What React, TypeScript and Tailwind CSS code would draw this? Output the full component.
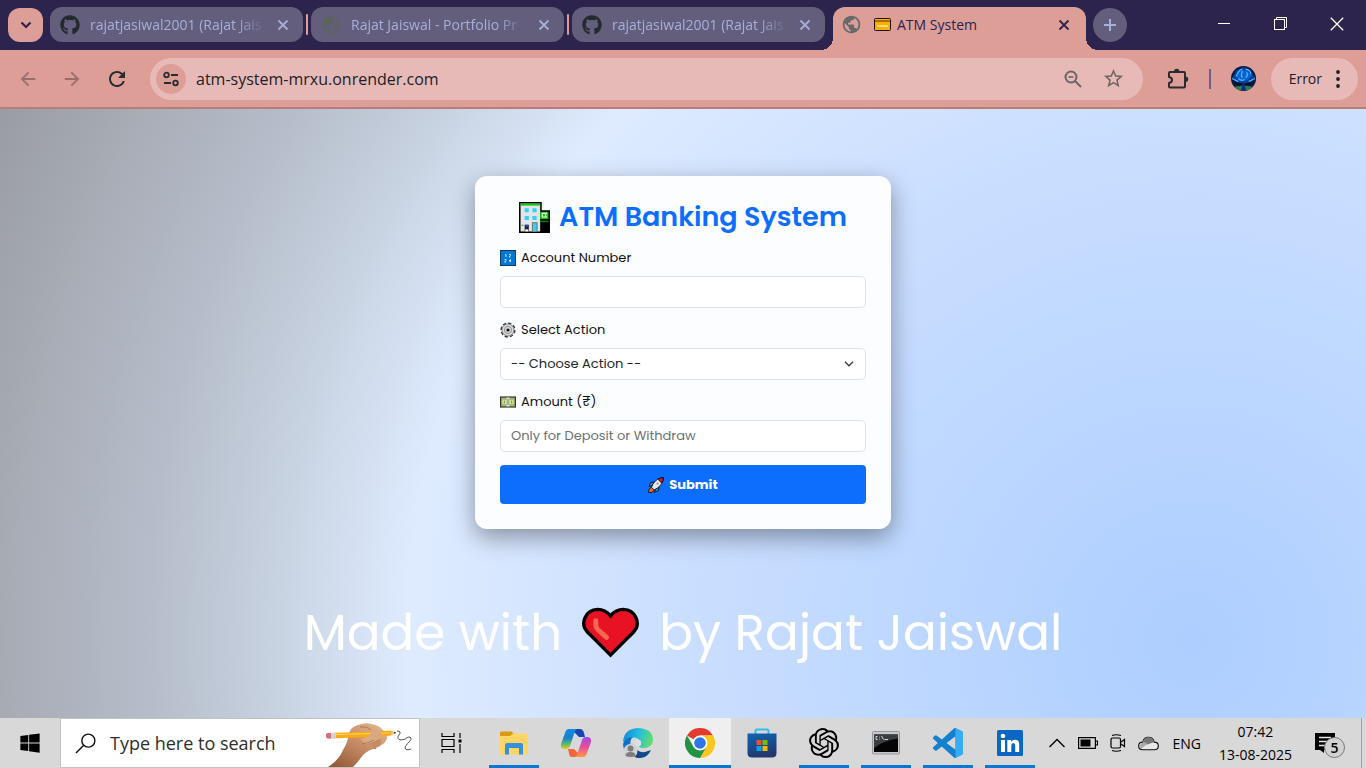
import React from "react";
import { FaGithub, FaWindows } from "react-icons/fa";
import { MdPublic, MdArrowBack, MdArrowForward, MdRefresh, MdStarBorder } from "react-icons/md";
import { SiOpenai } from "react-icons/si";

/* ---------- Browser chrome ---------- */

function CloseIcon() {
  return (
    <svg viewBox="0 0 12 12" className="size-3" stroke="currentColor" strokeWidth="1.800" fill="none" aria-hidden="true">
      <path d="M1.500 1.500l9 9M10.500 1.500l-9 9" />
    </svg>
  );
}

function DimGlobe() {
  return (
    <svg viewBox="0 0 18 18" className="size-[18px]" fill="none" stroke="#5d645c" strokeWidth="1.300" aria-hidden="true">
      <circle cx="9" cy="9" r="8" />
      <path d="M9 1.500c3 1 1.500 2.500.5 3.500s1 2-.5 2.500-2.500.5-3 2-.5 1-1.500.5S2.500 9 1.500 8.500C2 4.500 5 1.500 9 1.500z" fill="#5d645c" />
      <path d="M16.500 8.500c-1.500 1.500-4-1-5 1s1 2 1.500 3 .5 1.500 0 2.500M6 16.500c0-2 1-2 1.500-3" />
    </svg>
  );
}

function Tab({ title, icon }: { title: string; icon: React.ReactNode }) {
  return (
    <div className="flex h-[35px] w-[253px] items-center rounded-xl bg-[#635e7c] pr-3 pl-[10px] text-[#a7aedb]">
      {icon}
      <span className="ml-[10px] flex-1 text-[14px] whitespace-nowrap [mask-image:linear-gradient(to_right,black_82%,transparent)]">
        {title}
      </span>
      <button aria-label={"Close " + title} className="ml-2 flex size-4 items-center justify-center">
        <CloseIcon />
      </button>
    </div>
  );
}

function TabSeparator() {
  return <span className="mx-[3px] h-[21px] w-[2px] rounded-full bg-[#dd9e98]" />;
}

function TabStrip() {
  return (
    <header className="flex h-[50px] bg-[#2c244d] pl-2">
      <button aria-label="Search tabs" className="mt-2 mr-[7px] flex h-[34px] w-[35px] items-center justify-center rounded-xl bg-[#dd9e98] text-[#2c244d]">
        <svg viewBox="0 0 12 8" className="h-2 w-3" fill="none" stroke="currentColor" strokeWidth="2.200" aria-hidden="true">
          <path d="M1.500 1.500L6 6l4.500-4.500" />
        </svg>
      </button>
      <div className="mt-[7px] flex h-[35px] items-center">
        <Tab title="rajatjasiwal2001 (Rajat Jais" icon={<FaGithub className="size-5 text-[#24292e]" />} />
        <TabSeparator />
        <Tab title="Rajat Jaiswal - Portfolio Pr" icon={<span className="flex size-5 items-center justify-center"><DimGlobe /></span>} />
        <TabSeparator />
        <Tab title="rajatjasiwal2001 (Rajat Jais" icon={<FaGithub className="size-5 text-[#24292e]" />} />
      </div>
      <div className="relative mt-[7px] ml-2 flex w-[253px] items-center rounded-t-xl bg-[#dd9e98] pr-[14px] pb-2 pl-2 text-[#2c244d]">
        <span className="absolute bottom-0 -left-3 size-3 bg-[radial-gradient(circle_at_0_0,transparent_12px,#dd9e98_12px)]" />
        <span className="absolute -right-3 bottom-0 size-3 bg-[radial-gradient(circle_at_100%_0,transparent_12px,#dd9e98_12px)]" />
        <MdPublic className="size-[21px] text-[#646a6c]" />
        <svg viewBox="0 0 17 13" className="ml-3 h-[13px] w-[17px]" aria-hidden="true">
          <rect x=".5" y=".5" width="16" height="12" rx="1" fill="#fcb100" stroke="#1c1200" />
          <path d="M1 2h15v2H1z" fill="#b36b00" />
          <path d="M3 8h11" stroke="#ffe7a3" strokeWidth="1.500" />
        </svg>
        <span className="ml-[6px] flex-1 text-[14px] whitespace-nowrap">ATM System</span>
        <button aria-label="Close ATM System" className="flex size-4 items-center justify-center">
          <CloseIcon />
        </button>
      </div>
      <button aria-label="New tab" className="mt-2 ml-[7px] flex size-[34px] items-center justify-center rounded-full bg-[#635e7c] text-[#a7aedb]">
        <svg viewBox="0 0 14 14" className="size-[14px]" stroke="currentColor" strokeWidth="2" aria-hidden="true">
          <path d="M7 1v12M1 7h12" />
        </svg>
      </button>
      <div className="ml-auto flex h-12 text-white">
        <button aria-label="Minimize" className="flex w-14 items-center justify-center">
          <svg viewBox="0 0 14 14" className="size-[14px]" stroke="currentColor" aria-hidden="true"><path d="M1 6.500h12" /></svg>
        </button>
        <button aria-label="Restore" className="flex w-14 items-center justify-center">
          <svg viewBox="0 0 14 14" className="size-[14px]" stroke="currentColor" fill="none" aria-hidden="true">
            <rect x="1.500" y="2.500" width="10" height="10" /><path d="M3.500 2.500v-2h10v10h-2" />
          </svg>
        </button>
        <button aria-label="Close window" className="flex w-[58px] items-center justify-center">
          <svg viewBox="0 0 14 14" className="size-[14px]" stroke="currentColor" strokeWidth="1.300" aria-hidden="true"><path d="M.8.8l12.400 12.400M13.200.8L.8 13.200" /></svg>
        </button>
      </div>
    </header>
  );
}

function Avatar() {
  return (
    <svg viewBox="0 0 24 24" className="size-[25px]" aria-hidden="true">
      <defs><clipPath id="avatar"><circle cx="12" cy="12" r="12" /></clipPath></defs>
      <g clipPath="url(#avatar)">
        <path d="M0 0h24v24H0z" fill="#06183d" />
        <path d="M1 12l4-8 7-3 6 2 5 8-7 6H8z" fill="#07419c" />
        <path d="M4 10l5-6h6l5 5-5 5H9z" fill="#0b63d6" />
        <path d="M5 10q2-6 6-7M14 3q5 1 5 5M7 12q3 3 6 1M11 5q-2 4 0 6M15 6q2 3-1 5M1 12l6 3M23 12l-6 3" stroke="#49b6ff" strokeWidth="1.200" fill="none" />
        <path d="M4 15l8 2 8-2-4 4H8z" fill="#031027" />
        <path d="M0 20.500l10-1.500h5l9 1.500V24H0z" fill="#2a7b55" />
        <path d="M11.500 16h1l2 8h-5z" fill="#0a2d7a" />
      </g>
    </svg>
  );
}

function Toolbar() {
  return (
    <div className="flex h-[59px] items-center border-b-2 border-[#b87d7b] bg-[#dd9e98] pr-2 pl-[17px] text-[#2b2b2d]">
      <button aria-label="Back" className="text-[#9a6e6d]"><MdArrowBack className="size-[22px]" /></button>
      <button aria-label="Forward" className="ml-[22px] text-[#9a6e6d]"><MdArrowForward className="size-[22px]" /></button>
      <button aria-label="Reload" className="ml-[22px]"><MdRefresh className="size-[24px]" /></button>
      <div className="ml-[21px] flex h-[42px] flex-1 items-center rounded-full bg-[#e8bab7] pr-[18px] pl-[6px]">
        <button aria-label="View site information" className="flex size-[30px] items-center justify-center rounded-full bg-[#dd9e98]">
          <svg viewBox="0 0 16 16" className="size-4" fill="none" stroke="currentColor" strokeWidth="1.800" aria-hidden="true">
            <circle cx="3.500" cy="4" r="2.300" /><path d="M8 4h7M1 12h7" /><circle cx="12.500" cy="12" r="2.300" />
          </svg>
        </button>
        <input aria-label="Address" readOnly value="atm-system-mrxu.onrender.com" className="ml-[10px] min-w-0 flex-1 bg-transparent text-[16px] text-[#202124] outline-none" />
        <button aria-label="Zoom" className="text-[#6d6466]">
          <svg viewBox="0 0 18 18" className="size-[18px]" fill="none" stroke="currentColor" strokeWidth="2" aria-hidden="true">
            <circle cx="7" cy="7" r="5.500" /><path d="M11 11l6 6" /><path d="M4.500 7h5" strokeWidth="1.600" />
          </svg>
        </button>
        <button aria-label="Bookmark this tab" className="ml-5 text-[#6d6466]"><MdStarBorder className="size-[23px]" /></button>
      </div>
      <button aria-label="Extensions" className="ml-6">
        <svg viewBox="0 0 22 22" className="size-[22px]" aria-hidden="true">
          <path d="M3 4h14a1 1 0 0 1 1 1v13.500a1 1 0 0 1-1 1H3a1 1 0 0 1-1-1V15q3-.5 3-3t-3-3V5a1 1 0 0 1 1-1z" fill="none" stroke="currentColor" strokeWidth="2" strokeLinejoin="round" />
          <path d="M7 3.500a2.700 2.700 0 0 1 5.400 0zM18.500 8.500a2.700 2.700 0 0 1 0 5.400z" fill="currentColor" />
        </svg>
      </button>
      <span className="ml-5 h-5 w-[2px] bg-[#6e608a]" />
      <button aria-label="Profile" className="ml-5"><Avatar /></button>
      <button className="ml-[15px] flex h-[42px] items-center rounded-full bg-[#e8bab7] pr-[18px] pl-[18px] text-[14px] text-[#202124]">
        <span>Error</span>
        <svg viewBox="0 0 4 18" className="ml-[14px] h-[18px] w-1" fill="currentColor" aria-hidden="true">
          <circle cx="2" cy="2" r="1.900" /><circle cx="2" cy="9" r="1.900" /><circle cx="2" cy="16" r="1.900" />
        </svg>
      </button>
    </div>
  );
}

/* ---------- Page ---------- */

function BankIcon() {
  return (
    <svg viewBox="0 0 30 30" className="size-[31px]" aria-hidden="true">
      <path d="M0 0h22v8h8v22H0z" fill="#000" />
      <path d="M1.500 1.500h19V28.500H1.500z" fill="#e3e5e8" />
      <path d="M1.500 1.500h19v2h-19z" fill="#16c60c" />
      <path d="M5.500 6h4v4h-4zM13 6h4v4h-4zM5.500 13.500h4v4h-4zM13 13.500h4v4h-4z" fill="#31d2f7" />
      <path d="M20.500 9.500h8v7h-8z" fill="#16c60c" />
      <path d="M22.500 11h4l-1 1.700 1 1.800h-4z" fill="none" stroke="#e8ffe8" />
      <path d="M20.500 18h8v1.500h-8z" fill="#0b7a06" />
      <path d="M12.500 19.500H18v9h-5.500z" fill="#767676" /><path d="M13.500 20.500h3.500v8h-3.500z" fill="#31d2f7" />
      <path d="M5.500 22h4v6.500h-4z" fill="#222" /><path d="M6.500 22h2v2h-2z" fill="#2a4bff" />
      <path d="M2.500 22.500h2" stroke="#16c60c" /><path d="M6 26.500h3v2H6z" fill="#fff" />
    </svg>
  );
}

function NumbersIcon() {
  return (
    <svg viewBox="0 0 16 16" className="size-4" aria-hidden="true">
      <rect x=".5" y=".5" width="15" height="15" fill="#0078d7" stroke="#123a63" />
      <path d="M5 5l1-.5V7M9 4.500h1.500v1L9 7h1.500M4.500 9.500H6v1L4.500 12H6M10.500 12V9.500L9 11h2" fill="none" stroke="#d7ecff" strokeWidth=".9" />
    </svg>
  );
}

function GearIcon() {
  return (
    <svg viewBox="0 0 16 16" className="size-4" fill="none" aria-hidden="true">
      <circle cx="8" cy="8" r="6.900" stroke="#333" strokeWidth="1.300" strokeDasharray="3.400 2" />
      <circle cx="8" cy="8" r="6" fill="#dadada" stroke="#444" strokeWidth=".6" />
      <circle cx="8" cy="8" r="3.600" stroke="#8a8a8a" strokeWidth=".9" />
      <circle cx="8" cy="8" r="1.600" fill="#111" />
    </svg>
  );
}

function CashIcon() {
  return (
    <svg viewBox="0 0 16 16" className="size-4" aria-hidden="true">
      <rect x=".6" y="3" width="14.800" height="10" fill="#a3b679" stroke="#30342a" strokeWidth="1.200" />
      <path d="M6.500 3.500h3v9h-3z" fill="#d9dccb" />
      <circle cx="4.300" cy="8" r="2.200" fill="#d4f08e" /><circle cx="11.700" cy="8" r="2.200" fill="#d4f08e" />
      <path d="M8 5v6M4.300 6.500v3M11.700 6.500v3" stroke="#5d7048" strokeWidth=".8" />
    </svg>
  );
}

function RocketIcon() {
  return (
    <svg viewBox="0 0 16 16" className="size-4" stroke="#000" strokeWidth=".8" strokeLinejoin="round" aria-hidden="true">
      <path d="M4 8.500L1 9.500l1.500-4L7 5zM7.500 12l-1 3.300 4-1.800L11 9z" fill="#0aa0d0" />
      <path d="M3.500 10L.8 12.500v3h3L6.500 13z" fill="#f7630c" />
      <path d="M15.300.7Q9 .8 5 7l-1.500 3.200 2.600 2.700L9.500 11q6-4.500 5.800-10.300z" fill="#e8eaed" />
      <path d="M15.300.7q-2.800 0-5.300 1.500l3.500 3.900Q15.300 3.500 15.300.7z" fill="#e81224" />
      <circle cx="9.500" cy="6.600" r="1.200" fill="#9aa3ad" stroke="none" />
    </svg>
  );
}

function HeartIcon() {
  return (
    <svg viewBox="0 0 58 52" className="mx-5 h-[51px] w-[57px]" aria-hidden="true">
      <path d="M29 49L5 25C-2 17 3 3 16 2.500c6 0 10 3 13 6.500 3-3.500 7-6.500 13-6.500C55 3 60 17 53 25z" fill="#e81224" stroke="#000" strokeWidth="3.400" />
      <path d="M14 14v4q0 3 2 5l9 8" fill="none" stroke="#f2694f" strokeWidth="5" strokeLinecap="round" />
    </svg>
  );
}

function Field({ id, label, icon, children }: { id: string; label: string; icon: React.ReactNode; children: React.ReactNode }) {
  return (
    <div>
      <label htmlFor={id} className="mb-2 flex h-5 items-center gap-[5px] text-[13px] text-[#111]">
        {icon}
        <span>{label}</span>
      </label>
      {children}
    </div>
  );
}

const control =
  "block h-8 w-full rounded-[5px] border border-[#dee2e6] bg-white px-[10px] text-[13px] text-[#212529] outline-none placeholder:text-[#6b7075]";

function AtmPage() {
  return (
    <main className="flex flex-1 flex-col items-center bg-[radial-gradient(circle_farthest-corner_at_87.2%_87.2%,#adceff_0%,#cbdfff_40%,#deebff_60%,#c4cedc_72%,#b6bdca_80%,#a8adb6_90%,#999ca3_100%)] px-4 pt-[67px] pb-12 font-['Poppins','Inter',sans-serif]">
      <form onSubmit={(e) => e.preventDefault()} className="w-full max-w-[416px] rounded-xl bg-[#fcfdff] px-[25px] pt-6 pb-[25px] shadow-[0_8px_24px_rgba(0,0,0,0.38)]">
        <h1 className="mb-[14px] flex h-[34px] items-center justify-center gap-[9px] text-[27px] font-semibold whitespace-nowrap text-[#0d6efd]">
          <BankIcon />
          <span>ATM Banking System</span>
        </h1>
        <div className="mb-[13px] flex flex-col gap-3">
          <Field id="account" label="Account Number" icon={<NumbersIcon />}>
            <input id="account" type="text" className={control} />
          </Field>
          <Field id="action" label="Select Action" icon={<GearIcon />}>
            <div className="relative">
              <select id="action" className={control + " appearance-none"}>
                <option>-- Choose Action --</option>
              </select>
              <svg viewBox="0 0 10 6" className="pointer-events-none absolute top-[13px] right-3 h-[6px] w-[10px]" fill="none" stroke="#343a40" strokeWidth="1.300" aria-hidden="true">
                <path d="M1 .8l4 4 4-4" />
              </svg>
            </div>
          </Field>
          <Field id="amount" label="Amount (₹)" icon={<CashIcon />}>
            <input id="amount" type="text" placeholder="Only for Deposit or Withdraw" className={control} />
          </Field>
        </div>
        <button type="submit" className="flex h-[39px] w-full items-center justify-center gap-[5px] rounded bg-[#0d6efd] text-[13px] font-bold text-white">
          <RocketIcon />
          <span>Submit</span>
        </button>
      </form>
      <footer className="mt-[65px] flex h-[76px] items-center text-[50px] whitespace-nowrap text-white">
        <span>Made with</span>
        <HeartIcon />
        <span>by Rajat Jaiswal</span>
      </footer>
    </main>
  );
}

/* ---------- Taskbar ---------- */

function HandPencil() {
  return (
    <svg viewBox="0 0 88 48" className="h-12 w-[88px]" aria-hidden="true">
      <defs>
        <linearGradient id="skin" x1="0" y1="1" x2=".8" y2="0">
          <stop offset="0" stopColor="#8f5233" /><stop offset=".5" stopColor="#c08660" /><stop offset="1" stopColor="#deb18b" />
        </linearGradient>
      </defs>
      <path d="M2 48q11-7 15-17 5-8 6-17 2-6 9-8 8-3 13-1 8 1 12 6l4 5q1 5-4 9l-5 3q-10 3-15 8-5 7-10 12z" fill="url(#skin)" />
      <path d="M42 24l10-2-2 8q-3 1-3-3zM49 22l6-2-1 7q-3 2-4-1z" fill="#c48a62" />
      <path d="M1 14l52-1.500 12-1v5L52 18 1 19.500z" fill="#fba919" />
      <path d="M10 15.500l54-1.500" stroke="#ffd566" strokeWidth="1.200" />
      <rect x="0" y="14" width="6" height="5.500" rx="2" fill="#d96b82" /><rect x="5" y="14" width="5" height="5.500" fill="#cfd3da" />
      <path d="M65 11.500l5 2.300-5 2.700z" fill="#e6c08e" /><path d="M68 12.800l2.500 1-2.500 1z" fill="#333" />
      <path d="M34 20q7-1 13-8 5-3 8 0 2 4-2 7-6 5-13 6z" fill="#dba97f" />
      <path d="M34 8q7-1 11 3M36 25q7-1 12-4" stroke="#a86e4b" strokeWidth=".8" fill="none" />
      <path d="M71 12q5 0 2 4t2 5q4 0 7-3 5 0 2 4-5 5-5 7 1 3 6 1" stroke="#555" fill="none" />
    </svg>
  );
}

function TaskViewIcon() {
  return (
    <svg viewBox="0 0 22 20" className="h-5 w-[22px]" fill="none" stroke="#000" strokeWidth="1.200" aria-hidden="true">
      <path d="M1 0v3.500h12V0M1 20v-3.500h12V20M1 6.500h12v7H1zM19 0v5M19 11v9" /><path d="M17.500 6.500h3v3h-3z" fill="#000" stroke="none" />
    </svg>
  );
}

function ExplorerIcon() {
  return (
    <svg viewBox="0 0 28 24" className="h-6 w-7" aria-hidden="true">
      <path d="M0 2a1.500 1.500 0 0 1 1.500-1.500h10L14 3v4H0z" fill="#d99a0b" />
      <path d="M0 5h10l3-2.500h13a2 2 0 0 1 2 2V22a1.500 1.500 0 0 1-1.500 1.500h-25A1.500 1.500 0 0 1 0 22z" fill="#ffd566" />
      <path d="M5 23.500V14a2 2 0 0 1 2-2h14a2 2 0 0 1 2 2v9.500h-4V17H9v6.500z" fill="#3592d8" />
    </svg>
  );
}

function CopilotIcon() {
  return (
    <svg viewBox="0 0 30 28" className="h-7 w-[30px]" aria-hidden="true">
      <defs>
        <linearGradient id="cpA" x1="0" y1="0" x2="0" y2="1"><stop offset="0" stopColor="#0a8ee0" /><stop offset=".45" stopColor="#1c7ed0" /><stop offset=".75" stopColor="#58bd6b" /><stop offset="1" stopColor="#f0c51b" /></linearGradient>
        <linearGradient id="cpB" x1="0" y1="0" x2="0" y2="1"><stop offset="0" stopColor="#9b4df0" /><stop offset=".5" stopColor="#ea4c9a" /><stop offset="1" stopColor="#ff9a45" /></linearGradient>
      </defs>
      <path d="M8 0h11q3 0 4 4l1 4h-6L14 4z" fill="#1446b8" />
      <path d="M22 28H11q-3 0-3-4l-1-4h6l3 3z" fill="#f5653b" />
      <path d="M8 0h8q-2 1-3 5l-4 12q-1 3-4 3H3q-4-1-3-5L4 4q1-4 4-4z" fill="url(#cpA)" />
      <path d="M22 28h-8q2-1 3-5l4-12q1-3 4-3h2q4 1 3 5l-4 11q-1 4-4 4z" fill="url(#cpB)" />
    </svg>
  );
}

function EdgeIcon() {
  return (
    <svg viewBox="0 0 30 30" className="size-[30px]" aria-hidden="true">
      <defs>
        <linearGradient id="edT" x1="0" y1=".3" x2="1" y2=".5"><stop offset="0" stopColor="#128bd9" /><stop offset=".5" stopColor="#27bde0" /><stop offset="1" stopColor="#62df66" /></linearGradient>
      </defs>
      <path d="M0 14Q1 0 16 0q14 1 14 12-1 8-9 8-5 0-5-2 2-2 1-5-3-5-10-3-4 1-7 4z" fill="url(#edT)" />
      <path d="M0 16q2-7 10-7-4 3-2 10l2 9Q0 25 0 16z" fill="#0f70c4" />
      <path d="M12 18q2 7 10 6l6-2q-4 9-14 8l-4-2z" fill="#114a8b" />
      <circle cx="7.500" cy="23" r="7" fill="#d2d2d2" /><circle cx="7.500" cy="20.500" r="3" fill="#7d7d7d" /><path d="M2.500 28q0-4 5-4t5 4q-4 2-10 0z" fill="#7d7d7d" />
      <circle cx="15" cy="15" r="3.200" fill="#e0e0e0" />
    </svg>
  );
}

function ChromeIcon() {
  return (
    <svg viewBox="0 0 30 30" className="size-[30px]" aria-hidden="true">
      <path d="M15 15L2 7.500A15 15 0 0 1 28 7.500H15z" fill="#e33b2e" />
      <path d="M15 7.500h13A15 15 0 0 1 15 30l6.500-11.200z" fill="#fcc61c" />
      <path d="M2 7.500A15 15 0 0 0 15 30l6.500-11.200H8.500z" fill="#229342" />
      <circle cx="15" cy="15" r="7.500" fill="#fff" /><circle cx="15" cy="15" r="5.800" fill="#2f75ea" />
    </svg>
  );
}

function StoreIcon() {
  return (
    <svg viewBox="0 0 30 30" className="size-[30px]" aria-hidden="true">
      <defs><linearGradient id="st" x1="0" y1="0" x2=".3" y2="1"><stop offset="0" stopColor="#0d66b5" /><stop offset="1" stopColor="#23386e" /></linearGradient></defs>
      <path d="M8.500 6V3a1.500 1.500 0 0 1 1.500-1.500h10A1.500 1.500 0 0 1 21.500 3v3" fill="none" stroke="#35b9ee" strokeWidth="2" />
      <path d="M.5 5.500h29V25q0 4.500-4.500 4.500H5Q.5 29.500.5 25z" fill="url(#st)" />
      <path d="M9.500 12h5v5h-5z" fill="#f25022" /><path d="M15.500 12h5v5h-5z" fill="#7fba00" />
      <path d="M9.500 18h5v5h-5z" fill="#00a4ef" /><path d="M15.500 18h5v5h-5z" fill="#ffb900" />
    </svg>
  );
}

function TerminalIcon() {
  return (
    <svg viewBox="0 0 28 24" className="h-6 w-7" aria-hidden="true">
      <rect x=".5" y=".5" width="27" height="22.500" rx="1" fill="#c5c8cc" stroke="#94979c" />
      <path d="M2 3.500h24v17.500H2z" fill="#050505" /><path d="M2 3.500h24v4Q12 9 2 17z" fill="#3c3d3f" />
      <path d="M5.500 5.500H4v3h1.500M7.500 5.800v.7M7.500 7.800v.7M9.500 5l2 3.500M12.500 8.500H16" stroke="#e8e8e8" fill="none" strokeWidth=".9" />
    </svg>
  );
}

function CodeIcon() {
  return (
    <svg viewBox="0 0 24 24" className="size-[30px]" aria-hidden="true">
      <path fill="#1481cf" d="M23.150 2.587L18.210.21a1.494 1.494 0 0 0-1.705.29l-9.460 8.630-4.120-3.128a.999.999 0 0 0-1.276.057L.327 7.261A1 1 0 0 0 .326 8.740L3.899 12 .326 15.260a1 1 0 0 0 .001 1.479L1.650 17.940a.999.999 0 0 0 1.276.057l4.120-3.128 9.460 8.630a1.492 1.492 0 0 0 1.704.29l4.942-2.377A1.500 1.500 0 0 0 24 20.060V3.939a1.500 1.500 0 0 0-.85-1.352zm-5.146 14.861L10.826 12l7.178-5.448v10.896z" />
      <path fill="#35acf3" d="M18 .2l5.150 2.387A1.500 1.500 0 0 1 24 3.939V20.060a1.500 1.500 0 0 1-.85 1.352L18 23.800z" />
    </svg>
  );
}

function LinkedInIcon() {
  return (
    <svg viewBox="0 0 26 26" className="size-[26px]" aria-hidden="true">
      <rect width="26" height="26" rx="1.500" fill="#0a66c2" />
      <circle cx="6" cy="6" r="2.300" fill="#fff" />
      <path d="M4 10h4v12H4zM10.300 10h3.800v1.700q1.200-2 3.900-2 4.200 0 4.200 5.200V22h-4v-6.300q0-2.600-1.900-2.600-2 0-2 2.600V22h-4z" fill="#fff" />
    </svg>
  );
}

const apps = [
  { name: "File Explorer", icon: <ExplorerIcon />, open: true },
  { name: "Copilot", icon: <CopilotIcon />, open: false },
  { name: "Microsoft Edge", icon: <EdgeIcon />, open: false },
  { name: "Google Chrome", icon: <ChromeIcon />, open: true, active: true },
  { name: "Microsoft Store", icon: <StoreIcon />, open: false },
  { name: "ChatGPT", icon: <SiOpenai className="size-[30px] text-black" />, open: true },
  { name: "Command Prompt", icon: <TerminalIcon />, open: true },
  { name: "Visual Studio Code", icon: <CodeIcon />, open: true },
  { name: "LinkedIn", icon: <LinkedInIcon />, open: true },
];

function Taskbar() {
  return (
    <nav aria-label="Taskbar" className="flex h-[50px] bg-[#d8d8d8] text-black">
      <button aria-label="Start" className="flex w-[60px] items-center justify-center"><FaWindows className="size-[22px]" /></button>
      <label className="flex w-[360px] items-center border border-[#c2c2c2] bg-white pl-[14px]">
        <svg viewBox="0 0 22 22" className="size-[21px]" fill="none" stroke="#111" strokeWidth="1.500" aria-hidden="true">
          <circle cx="14" cy="8" r="6.800" /><path d="M9.200 12.800L1 21" />
        </svg>
        <input type="text" aria-label="Search" placeholder="Type here to search" className="ml-[14px] min-w-0 flex-1 bg-transparent text-[18px] outline-none placeholder:text-[#2e2e2e]" />
        <span className="mr-[5px]"><HandPencil /></span>
      </label>
      <button aria-label="Task view" className="flex w-[63px] items-center justify-center"><TaskViewIcon /></button>
      {apps.map((app) => (
        <button key={app.name} aria-label={app.name} className={"relative flex w-[62px] items-center justify-center " + (app.active ? "bg-[#efefef]" : "")}>
          {app.icon}
          {app.open && <span className={"absolute bottom-0 h-[3px] bg-[#0078d4] " + (app.active ? "inset-x-0" : "inset-x-[6px]")} />}
        </button>
      ))}
      <div className="ml-auto flex items-center">
        <button aria-label="Show hidden icons">
          <svg viewBox="0 0 16 10" className="h-[10px] w-4" fill="none" stroke="#000" strokeWidth="1.300" aria-hidden="true"><path d="M.5 9L8 1.500 15.500 9" /></svg>
        </button>
        <svg viewBox="0 0 20 12" className="ml-[13px] h-3 w-5" aria-hidden="true">
          <path d="M.6.6h16.800v10.800H.6zM17.500 4h2v4h-2" fill="none" stroke="#000" strokeWidth="1.200" /><path d="M2.500 2.500h10v7h-10z" />
        </svg>
        <svg viewBox="0 0 16 18" className="ml-3 h-[18px] w-4" fill="none" stroke="#000" strokeWidth="1.200" aria-hidden="true">
          <rect x="1" y="4" width="9.500" height="10" rx="1.500" /><path d="M11 8l3.500-2.500v7L11 10M2 1.500Q6 0 11 1.500M2 16.500q4 1.500 9 0" />
        </svg>
        <svg viewBox="0 0 22 15" className="ml-3 h-[15px] w-[21px]" aria-hidden="true">
          <path d="M5 14q-4.300 0-4.300-4T5 6q1-5 6-5t6 5q4.300 0 4.300 4T17 14z" fill="#e8e8e8" stroke="#111" strokeWidth="1.200" />
          <path d="M5 6q1-5 6-5t6 5l-7 2.500z" fill="#777" /><path d="M5 6.500q2-1 5 1.500L3 13q-3-4 2-6.500z" fill="#aaa" />
        </svg>
        <span className="ml-[13px] text-[14px]">ENG</span>
        <div className="ml-[18px] text-center text-[14px] leading-[23px]">
          <div>07:42</div>
          <div>13-08-2025</div>
        </div>
        <button aria-label="5 new notifications" className="relative mr-4 ml-[23px] h-[30px] w-[30px]">
          <svg viewBox="0 0 20 20" className="size-5" aria-hidden="true">
            <path d="M0 0h20v17H9v3l-4-3H0z" /><path d="M4 4.500h12M4 8.500h12M4 12.500h7" stroke="#e8e8e8" strokeWidth="1.300" />
          </svg>
          <span className="absolute right-0 bottom-0 flex size-[21px] items-center justify-center rounded-full border border-[#777] bg-[#d2d2d2] text-[14px] font-semibold">5</span>
        </button>
        <span className="h-[50px] w-[5px] border-l border-[#a0a0a0]" />
      </div>
    </nav>
  );
}

export default function App() {
  return (
    <div className="flex min-h-screen flex-col font-['Segoe_UI','Open_Sans','Noto_Sans',sans-serif]">
      <TabStrip />
      <Toolbar />
      <AtmPage />
      <Taskbar />
    </div>
  );
}
